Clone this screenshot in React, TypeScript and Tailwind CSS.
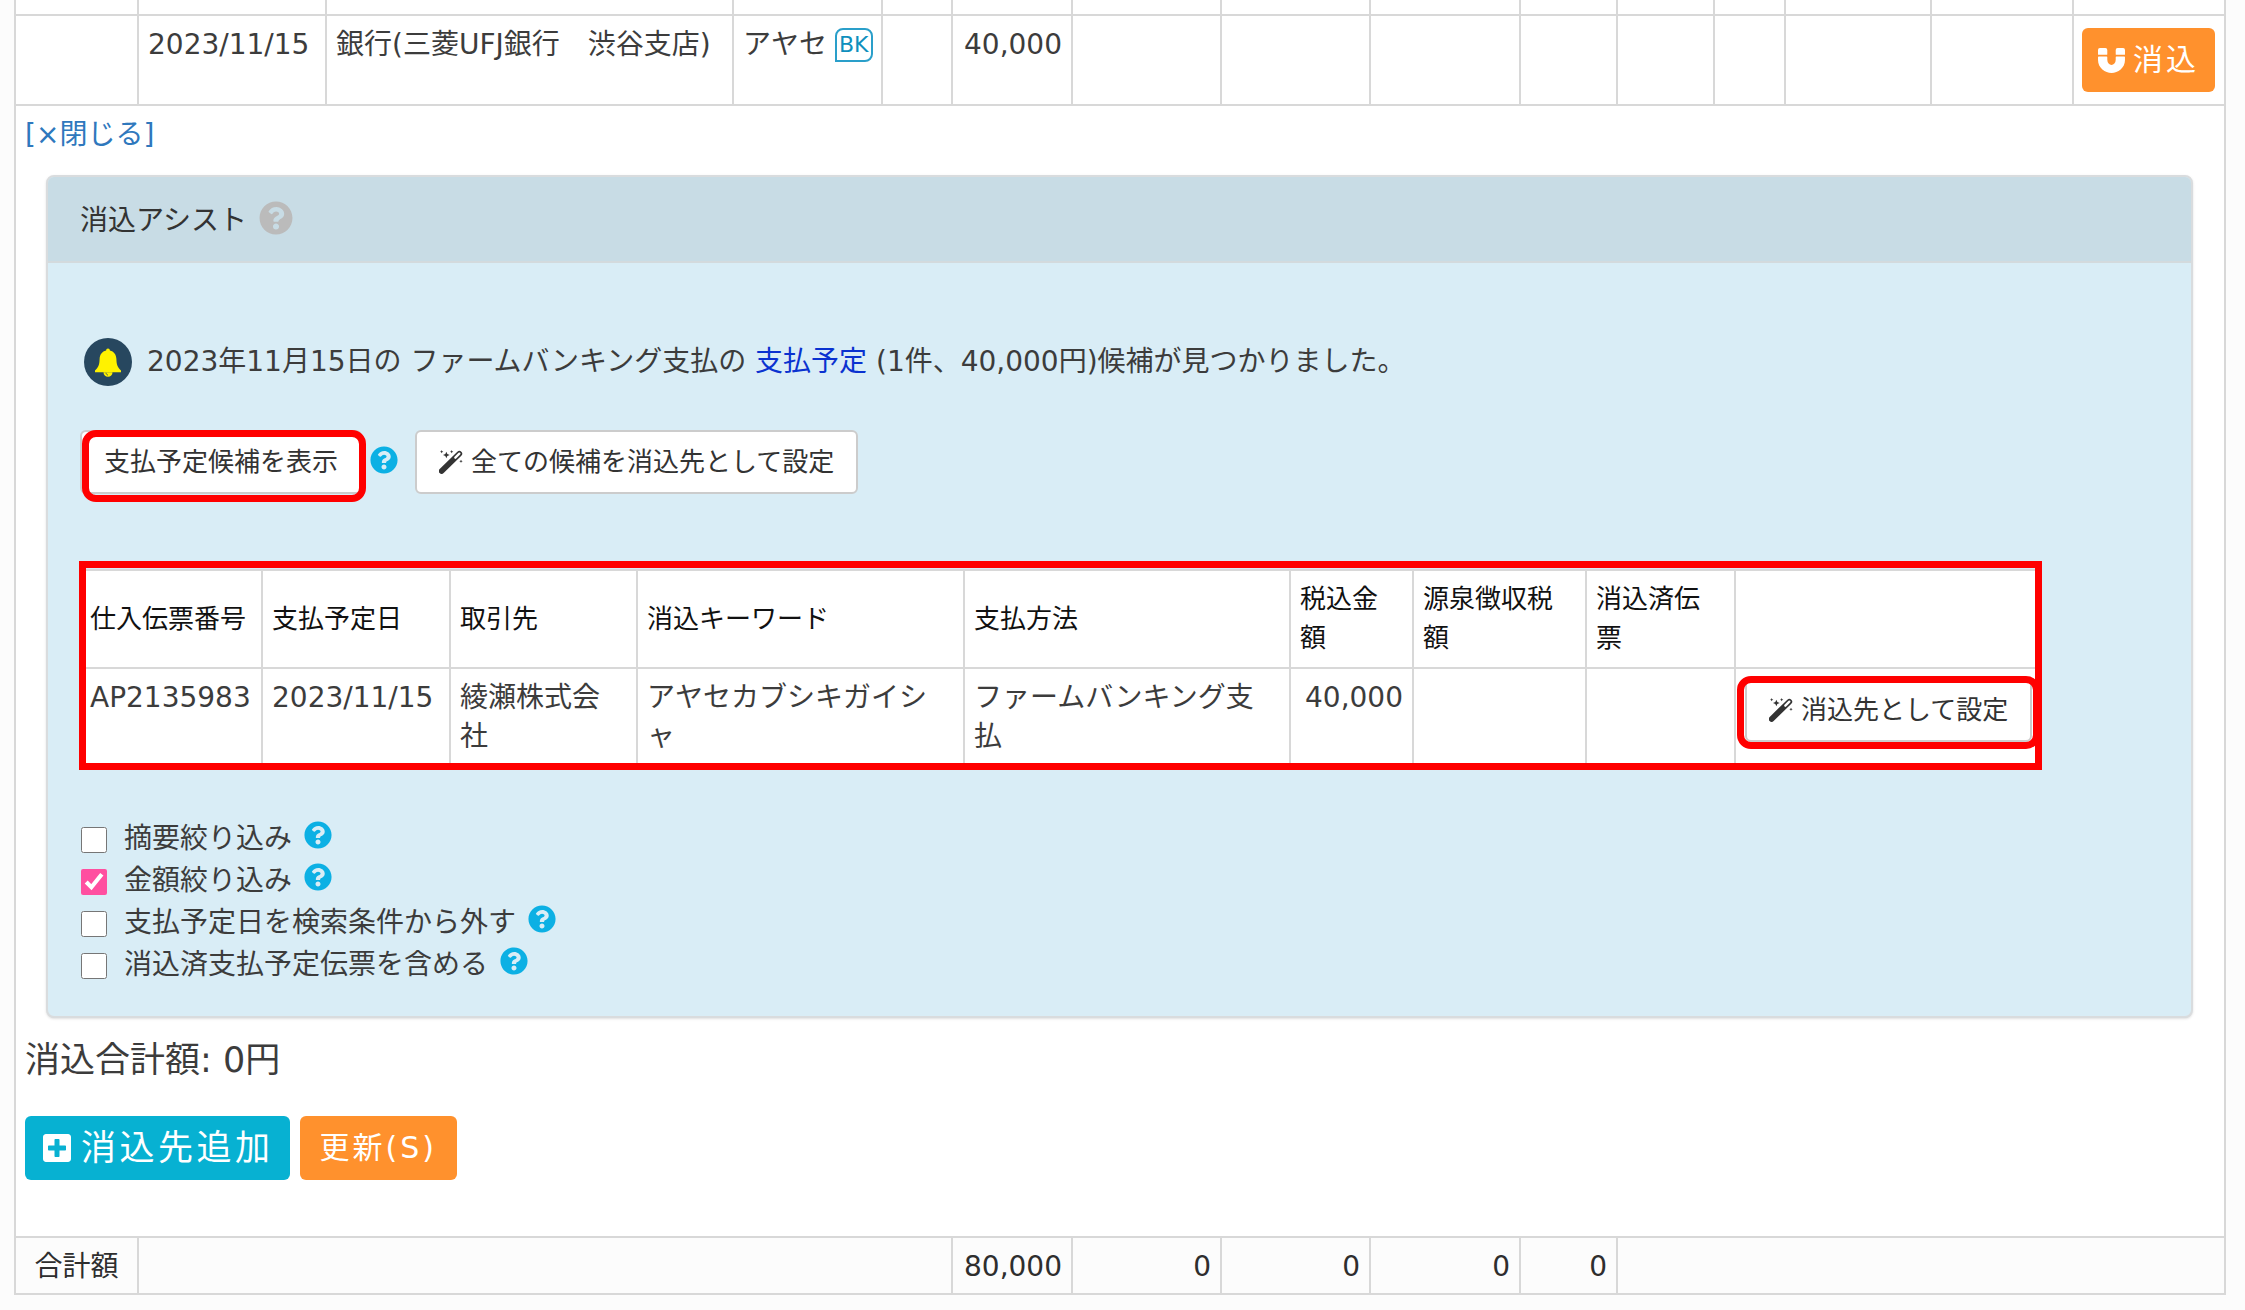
import type { ReactNode } from 'react'
import { clsx } from 'clsx'
import { FaMagnet, FaPlusSquare, FaQuestionCircle } from 'react-icons/fa'

const LEDGER_COLS = [
  'w-[123px]', 'w-[188px]', 'w-[407px]', 'w-[149px]', 'w-[70px]',
  'w-[120px]', 'w-[149px]', 'w-[149px]', 'w-[150px]', 'w-[97px]',
  'w-[97px]', 'w-[71px]', 'w-[146px]', 'w-[142px]', 'w-auto',
]

const CANDIDATE_COLS = [
  { label: '仕入伝票番号', width: 'w-[182px]' },
  { label: '支払予定日',   width: 'w-[188px]' },
  { label: '取引先',       width: 'w-[187px]' },
  { label: '消込キーワード', width: 'w-[327px]' },
  { label: '支払方法',     width: 'w-[326px]' },
  { label: '税込金額',     width: 'w-[123px]' },
  { label: '源泉徴収税額', width: 'w-[173px]' },
  { label: '消込済伝票',   width: 'w-[149px]' },
  { label: '',             width: 'w-auto' },
]

const FILTERS = [
  { id: 'summary', label: '摘要絞り込み',             checked: false },
  { id: 'amount',  label: '金額絞り込み',             checked: true  },
  { id: 'date',    label: '支払予定日を検索条件から外す', checked: false },
  { id: 'settled', label: '消込済支払予定伝票を含める',   checked: false },
]

const cell = 'border-2 border-[#d8d8d8] px-[9px]'

function HelpIcon({ className }: { className: string }) {
  return (
    <button type="button" aria-label="ヘルプ" className={clsx('shrink-0 rounded-full', className)}>
      <FaQuestionCircle className="size-full" />
    </button>
  )
}

function PlainButton({ children }: { children: ReactNode }) {
  return (
    <button
      type="button"
      className="flex h-16 items-center gap-2 whitespace-nowrap rounded-md border-2 border-[#ccc] bg-white px-[22px] text-[26px] text-[#333]"
    >
      {children}
    </button>
  )
}

// Red frame laid over the thing to point at
function Marker({ className }: { className: string }) {
  return <span aria-hidden className={clsx('pointer-events-none absolute border-[7px] border-[#ff0000]', className)} />
}

function BellBadge() {
  return (
    <svg viewBox="0 0 48 48" className="size-12 shrink-0" aria-hidden>
      <circle cx="24" cy="24" r="24" fill="#27475f" />
      <path
        fill="#fff200"
        d="M24 10.500c1.200 0 1.800.8 1.900 1.900 4 .9 6.300 4 6.500 8.600.2 5.500.9 8 4.600 11.500v1.800H11v-1.800c3.700-3.500 4.400-6 4.600-11.500.2-4.600 2.500-7.700 6.500-8.600.1-1.100.7-1.900 1.900-1.900z"
      />
      <path fill="#fff200" d="M19.500 34.300h9c0 2.800-2 4.500-4.500 4.500s-4.500-1.700-4.500-4.500z" />
      <path d="M22 34.800c.2 1.300.8 2 2 2.300" fill="none" stroke="#27475f" strokeWidth="0.8" />
    </svg>
  )
}

function WandIcon() {
  return (
    <svg viewBox="0 0 72 72" className="size-6 shrink-0" aria-hidden>
      <g strokeLinecap="round">
        <path d="M8 63L61 11" stroke="#333" strokeWidth="17" />
        <path d="M49 23L61 11" stroke="#fff" strokeWidth="7" />
      </g>
      <path
        fill="#333"
        d="M22 5l3 7 7 3-7 3-3 7-3-7-7-3 7-3zM8 0l1.500 3.500L13 5 9.500 6.500 8 10 6.500 6.500 3 5l3.500-1.500zM38 0l1.500 3.500L43 5l-3.500 1.500L38 10l-1.500-3.500L33 5l3.500-1.500zM66 29l1.500 3.500L71 34l-3.500 1.500L66 39l-1.500-3.500L61 34l3.500-1.500z"
      />
    </svg>
  )
}

function CandidateTable() {
  return (
    <div className="relative mt-[75px] -ml-px w-[1959px] max-w-full">
      <table className="w-full table-fixed border-collapse bg-white leading-[39px]">
        <thead>
          <tr className="h-[98px]">
            {CANDIDATE_COLS.map(({ label, width }) => (
              <th key={width + label} scope="col" className={clsx(cell, width, 'text-left text-[26px] font-normal text-[#111]')}>
                {label}
              </th>
            ))}
          </tr>
        </thead>
        <tbody>
          <tr className="h-[97px] align-top">
            <td className={clsx(cell, 'pt-[9px]')}>AP2135983</td>
            <td className={clsx(cell, 'pt-[9px]')}>2023/11/15</td>
            <td className={clsx(cell, 'pt-[9px]')}>綾瀬株式会社</td>
            <td className={clsx(cell, 'break-all pt-[9px]')}>アヤセカブシキガイシャ</td>
            <td className={clsx(cell, 'pt-[9px]')}>ファームバンキング支払</td>
            <td className={clsx(cell, 'pt-[9px] text-right')}>40,000</td>
            <td className={cell} />
            <td className={cell} />
            <td className={clsx(cell, 'pt-[9px]')}>
              <div className="relative w-fit">
                <PlainButton>
                  <WandIcon />
                  消込先として設定
                </PlainButton>
                <Marker className="-inset-x-2 -top-0.5 -bottom-[7px] rounded-[14px]" />
              </div>
            </td>
          </tr>
        </tbody>
      </table>
      <Marker className="left-0 -right-1 -top-2 -bottom-1" />
    </div>
  )
}

function AssistPanel() {
  return (
    <section className="ml-[21px] mr-[22px] mt-5 rounded-lg border-2 border-[#d9dcde] bg-[#d9edf6] shadow-sm">
      <h2 className="flex h-[86px] items-center gap-3 rounded-t-md border-b-2 border-[#d3dadd] bg-[#c8dce5] px-8 pt-[3px] text-[#333]">
        消込アシスト
        <HelpIcon className="mb-1.5 size-[34px] text-[#bbb]" />
      </h2>

      <div className="px-8 pb-[30px] pt-[75px]">
        <p className="flex items-center gap-[15px] pl-1">
          <BellBadge />
          <span>
            2023年11月15日の ファームバンキング支払の{' '}
            <a href="#plan" className="text-[#0a32d0]">支払予定</a>{' '}
            (1件、40,000円)候補が見つかりました。
          </span>
        </p>

        <div className="mt-11 flex items-center">
          <div className="relative">
            <PlainButton>支払予定候補を表示</PlainButton>
            <Marker className="-right-1 left-0.5 top-0 -bottom-2 rounded-[14px]" />
          </div>
          <HelpIcon className="mb-1 ml-2 mr-[17px] size-7 text-[#0cb0e4]" />
          <PlainButton>
            <WandIcon />
            全ての候補を消込先として設定
          </PlainButton>
        </div>

        <CandidateTable />

        <ul className="mt-[52px]">
          {FILTERS.map(({ id, label, checked }) => (
            <li key={id} className="flex h-[42px] items-center">
              <input
                id={id}
                type="checkbox"
                defaultChecked={checked}
                className="ml-px mt-0.5 size-[26px] accent-[#ff4fa0]"
              />
              <label htmlFor={id} className="ml-[17px] mr-3">{label}</label>
              <HelpIcon className="mb-2 size-7 text-[#0cb0e4]" />
            </li>
          ))}
        </ul>
      </div>
    </section>
  )
}

export default function App() {
  return (
    <div className="min-h-screen bg-[#fcfcfc] pb-3 pl-[14px] pr-[19px] font-['DejaVu_Sans','Noto_Sans_CJK_JP',sans-serif] text-[28px] leading-[40px] text-[#3c3c3c]">
      <table className="w-full table-fixed border-collapse bg-white">
        <colgroup>
          {LEDGER_COLS.map((width, i) => <col key={i} className={width} />)}
        </colgroup>
        <tbody>
          <tr className="h-[15px]">
            {LEDGER_COLS.map((_, i) => <td key={i} className={clsx(cell, 'border-t-0')} />)}
          </tr>
          <tr className="h-[90px] whitespace-nowrap align-top">
            <td className={cell} />
            <td className={clsx(cell, 'py-[9px]')}>2023/11/15</td>
            <td className={clsx(cell, 'py-[9px]')}>銀行(三菱UFJ銀行　渋谷支店)</td>
            <td className={clsx(cell, 'py-[9px]')}>
              <div className="flex items-center gap-2">
                アヤセ
                <span className="rounded-lg rounded-bl-none border-2 border-[#2a9fca] px-0.5 text-[22px] leading-[30px] text-[#0f8fbd]">BK</span>
              </div>
            </td>
            <td className={cell} />
            <td className={clsx(cell, 'py-[9px] text-right')}>40,000</td>
            {LEDGER_COLS.slice(6, 14).map((_, i) => <td key={i} className={cell} />)}
            <td className="border-2 border-[#d8d8d8] px-2 pb-2.5 pt-3">
              <button type="button" className="flex h-16 items-center gap-2 rounded-md bg-[#ff912d] px-4 text-[30px] tracking-widest text-white">
                <FaMagnet className="size-[27px]" />
                消込
              </button>
            </td>
          </tr>
          <tr>
            <td colSpan={15} className="border-2 border-[#d8d8d8] px-[9px] pb-14 pt-[9px] align-top">
              <a href="#close" className="text-[#2f78bd]">[×閉じる]</a>
              <AssistPanel />
              <p className="mt-[22px] text-[35px]">消込合計額: 0円</p>
              <div className="mt-9 flex items-center gap-2.5">
                <button type="button" className="flex h-16 items-center gap-2 rounded-md bg-[#07b1d2] px-4 text-[35px] tracking-widest text-white">
                  <FaPlusSquare className="size-8" />
                  消込先追加
                </button>
                <button type="button" className="h-16 rounded-md bg-[#ff912d] px-5 text-[30px] tracking-widest text-white">
                  更新(S)
                </button>
              </div>
            </td>
          </tr>
        </tbody>
        <tfoot>
          <tr className="h-[57px] bg-[#fcfcfc] text-right text-[#2e2e2e]">
            <th scope="row" className={clsx(cell, 'pt-0.5 text-center font-normal')}>合計額</th>
            <td colSpan={4} className={cell} />
            <td className={clsx(cell, 'pt-0.5')}>80,000</td>
            <td className={clsx(cell, 'pt-0.5')}>0</td>
            <td className={clsx(cell, 'pt-0.5')}>0</td>
            <td className={clsx(cell, 'pt-0.5')}>0</td>
            <td className={clsx(cell, 'pt-0.5')}>0</td>
            <td colSpan={5} className={cell} />
          </tr>
        </tfoot>
      </table>
    </div>
  )
}
